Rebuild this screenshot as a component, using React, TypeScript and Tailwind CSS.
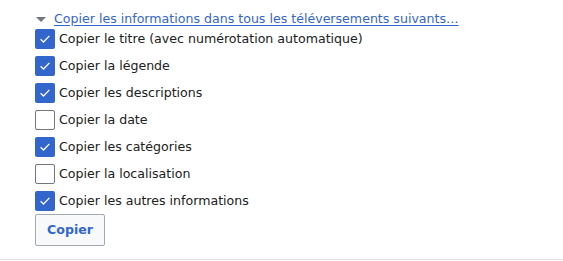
const items = [
  { label: 'Copier le titre (avec numérotation automatique)', checked: true },
  { label: 'Copier la légende', checked: true },
  { label: 'Copier les descriptions', checked: true },
  { label: 'Copier la date', checked: false },
  { label: 'Copier les catégories', checked: true },
  { label: 'Copier la localisation', checked: false },
  { label: 'Copier les autres informations', checked: true },
];

function Checkbox({ checked }: { checked: boolean }) {
  return checked ? (
    <span className="flex h-5 w-5 shrink-0 items-center justify-center rounded-[2px] bg-[#36c]">
      <svg width="12" height="10" viewBox="0 0 12 10" fill="none">
        <path d="M1.6 5.2 4.5 8 10.4 1.9" stroke="white" strokeWidth="1.3" />
      </svg>
    </span>
  ) : (
    <span className="h-5 w-5 shrink-0 rounded-[2px] border border-[#72777d] bg-white" />
  );
}

export default function App() {
  return (
    <div className="h-[261px] w-[563px] bg-white font-['DejaVu_Sans',sans-serif] text-[12.6px] text-[#202122]">
      <div className="flex h-[260px] flex-col border-b border-[#dadde3] pl-[35px] pt-[10px]">
        <div className="flex h-[19px] items-center">
          <svg width="10" height="5" viewBox="0 0 10 5" className="ml-[1px] mr-[8px]">
            <path d="M0 0h10L5 5z" fill="#72777d" />
          </svg>
          <a href="#" className="text-[#36c] underline underline-offset-2">
            Copier les informations dans tous les téléversements suivants…
          </a>
        </div>
        <ul className="flex flex-col gap-[7px]">
          {items.map((item) => (
            <li key={item.label} className="flex h-5 items-center gap-[4px]">
              <Checkbox checked={item.checked} />
              <span>{item.label}</span>
            </li>
          ))}
        </ul>
        <div className="pt-[3px]">
          <button className="h-[32px] rounded-[2px] border border-[#a2a9b1] bg-[#f8f9fa] px-[11px] font-bold text-[#36c]">
            Copier
          </button>
        </div>
      </div>
    </div>
  );
}
